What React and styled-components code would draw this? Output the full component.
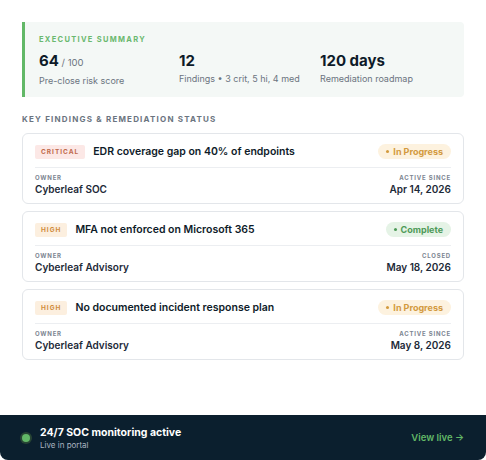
import React from 'react'
import styled, { createGlobalStyle } from 'styled-components'

const GlobalStyle = createGlobalStyle`
    html, body {
        margin: 0;
        padding: 0;
        background: #ffffff;
    }
    body {
        font-family: Inter, "Noto Sans", sans-serif;
        color: #0f1b2a;
    }
`;

const findings = [
    {
        sev: 'critical',
        title: 'EDR coverage gap on 40% of endpoints',
        status: 'progress',
        owner: 'Cyberleaf SOC',
        dateLabel: 'Active since',
        date: 'Apr 14, 2026',
    },
    {
        sev: 'high',
        title: 'MFA not enforced on Microsoft 365',
        status: 'complete',
        owner: 'Cyberleaf Advisory',
        dateLabel: 'Closed',
        date: 'May 18, 2026',
    },
    {
        sev: 'high',
        title: 'No documented incident response plan',
        status: 'progress',
        owner: 'Cyberleaf Advisory',
        dateLabel: 'Active since',
        date: 'May 8, 2026',
    },
]

const App = () => {
    return (
        <Page>
            <GlobalStyle />
            <Content>
                <Summary>
                    <Eyebrow>Executive Summary</Eyebrow>
                    <Stats>
                        <Stat>
                            <Big>64<Small> / 100</Small></Big>
                            <StatLabel>Pre-close risk score</StatLabel>
                        </Stat>
                        <Stat>
                            <Big>12</Big>
                            <StatLabel>Findings • 3 crit, 5 hi, 4 med</StatLabel>
                        </Stat>
                        <Stat>
                            <Big>120 days</Big>
                            <StatLabel>Remediation roadmap</StatLabel>
                        </Stat>
                    </Stats>
                </Summary>

                <SectionTitle>Key Findings &amp; Remediation Status</SectionTitle>

                <List>
                    {findings.map((f) => (
                        <Card key={f.title}>
                            <CardTop>
                                <Severity sev={f.sev}>{f.sev}</Severity>
                                <Title>{f.title}</Title>
                                <Status status={f.status}>
                                    <Dot />
                                    {f.status === 'complete' ? 'Complete' : 'In Progress'}
                                </Status>
                            </CardTop>
                            <CardBottom>
                                <Meta>
                                    <MetaLabel>Owner</MetaLabel>
                                    <MetaValue>{f.owner}</MetaValue>
                                </Meta>
                                <Meta right>
                                    <MetaLabel>{f.dateLabel}</MetaLabel>
                                    <MetaValue>{f.date}</MetaValue>
                                </Meta>
                            </CardBottom>
                        </Card>
                    ))}
                </List>
            </Content>

            <Footer>
                <LiveDot />
                <FooterText>
                    <FooterTitle>24/7 SOC monitoring active</FooterTitle>
                    <FooterSub>Live in portal</FooterSub>
                </FooterText>
                <ViewLive>View live →</ViewLive>
            </Footer>
        </Page>
    )
}

const Page = styled.div`
    width: 486px;
    height: 460px;
    display: flex;
    flex-direction: column;
    border-radius: 0 0 8px 8px;
    overflow: hidden;
`;

const Content = styled.div`
    flex: 1;
    padding: 22px 22px 0 22px;
`;

const Summary = styled.div`
    background: #f4f8f6;
    border-left: 3px solid #62b867;
    border-radius: 0 4px 4px 0;
    padding: 13px 16px 11px 14px;
`;

const Eyebrow = styled.div`
    font-size: 7.5px;
    font-weight: 700;
    letter-spacing: 1.3px;
    text-transform: uppercase;
    color: #6ab86f;
    margin-bottom: 7px;
    line-height: 10px;
`;

const Stats = styled.div`
    display: grid;
    grid-template-columns: 140px 141px 1fr;
`;

const Stat = styled.div`
    display: flex;
    flex-direction: column;
    gap: 3px;
`;

const Big = styled.div`
    font-size: 15px;
    font-weight: 700;
    color: #0e1b29;
    line-height: 18px;
`;

const Small = styled.span`
    font-size: 9.5px;
    font-weight: 400;
    color: #6b7480;
`;

const StatLabel = styled.div`
    font-size: 9px;
    line-height: 11px;
    color: #6b7480;
`;

const SectionTitle = styled.div`
    margin: 17px 0 9px 0;
    font-size: 8px;
    font-weight: 700;
    letter-spacing: 1.2px;
    text-transform: uppercase;
    color: #6b7480;
`;

const List = styled.div`
    display: flex;
    flex-direction: column;
    gap: 7px;
`;

const Card = styled.div`
    border: 1px solid #e3e6ea;
    border-radius: 6px;
    padding: 10px 12px 8px 12px;
    background: #fff;
`;

const CardTop = styled.div`
    display: flex;
    align-items: center;
    gap: 8px;
    padding-bottom: 8px;
    border-bottom: 1px solid #eceef1;
`;

const sevColors = {
    critical: { bg: '#fce8e6', fg: '#c06a4c' },
    high: { bg: '#fcefdf', fg: '#d08c3c' },
}

const Severity = styled.span`
    font-size: 6.5px;
    font-weight: 700;
    letter-spacing: 1px;
    text-transform: uppercase;
    padding: 3px 6px;
    border-radius: 2px;
    background: ${(p) => sevColors[p.sev].bg};
    color: ${(p) => sevColors[p.sev].fg};
`;

const Title = styled.div`
    flex: 1;
    font-size: 10.5px;
    font-weight: 600;
    color: #0e1b29;
`;

const Dot = styled.span`
    width: 3px;
    height: 3px;
    border-radius: 50%;
    background: currentColor;
`;

const Status = styled.span`
    display: flex;
    align-items: center;
    gap: 4px;
    font-size: 9px;
    font-weight: 700;
    padding: 2px 8px;
    border-radius: 8px;
    background: ${(p) => (p.status === 'complete' ? '#e5f3e6' : '#fdf2df')};
    color: ${(p) => (p.status === 'complete' ? '#4e9a58' : '#d39a3e')};
`;

const CardBottom = styled.div`
    display: flex;
    justify-content: space-between;
    padding-top: 6px;
`;

const Meta = styled.div`
    display: flex;
    flex-direction: column;
    gap: 2px;
    align-items: ${(p) => (p.right ? 'flex-end' : 'flex-start')};
`;

const MetaLabel = styled.div`
    font-size: 6px;
    font-weight: 700;
    letter-spacing: 0.8px;
    text-transform: uppercase;
    color: #7c8591;
`;

const MetaValue = styled.div`
    font-size: 10px;
    font-weight: 600;
    color: #1d2a38;
`;

const Footer = styled.div`
    height: 45px;
    background: #0b1f2e;
    display: flex;
    align-items: center;
    padding: 0 22px 0 22px;
    gap: 10px;
`;

const LiveDot = styled.span`
    width: 8px;
    height: 8px;
    border-radius: 50%;
    background: #62b867;
    box-shadow: 0 0 0 2px #274434;
`;

const FooterText = styled.div`
    flex: 1;
    display: flex;
    flex-direction: column;
    gap: 1px;
`;

const FooterTitle = styled.div`
    font-size: 10.5px;
    font-weight: 700;
    color: #ffffff;
`;

const FooterSub = styled.div`
    font-size: 8px;
    color: #a9b4c0;
`;

const ViewLive = styled.div`
    font-size: 9.5px;
    font-weight: 600;
    color: #62b867;
`;

export default App
